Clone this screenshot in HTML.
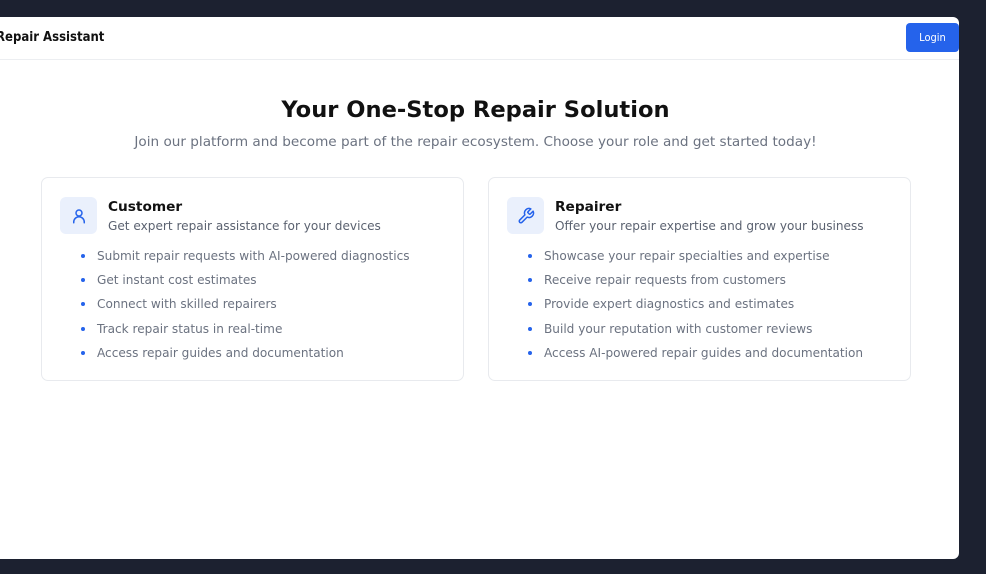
<!DOCTYPE html>
<html><head><style>
*{margin:0;padding:0;box-sizing:border-box}
body{width:986px;height:574px;background:#1c2130;font-family:"DejaVu Sans","Liberation Sans",sans-serif;position:relative;overflow:hidden}
.panel{position:absolute;left:0;top:17px;width:959px;height:542px;background:#fff;border-radius:0 6px 6px 0}
.hdr{height:43px;border-bottom:1px solid #eceef1;position:relative}
.brand{position:absolute;left:-4px;top:13px;font-size:13px;font-weight:bold;color:#111;font-family:"DejaVu Sans Condensed","DejaVu Sans",sans-serif}
.login{position:absolute;left:906px;top:6px;width:53px;height:29px;background:#2563eb;color:#fff;border-radius:4px;font-size:11px;text-align:center;line-height:29px;font-family:"DejaVu Sans Condensed","DejaVu Sans",sans-serif}
h1{position:absolute;top:80px;left:0;width:951px;text-align:center;font-size:22.6px;color:#111;font-weight:bold}
.sub{position:absolute;top:117px;left:0;width:951px;text-align:center;font-size:13.6px;color:#6b7280}
.card{position:absolute;top:160px;width:423px;height:204px;border:1px solid #e8eaee;border-radius:7px}
.ic{position:absolute;left:18px;top:19px;width:37px;height:37px;background:#eaf0fc;border-radius:6px;display:flex;align-items:center;justify-content:center}
.ct{position:absolute;left:66px;top:21px;font-size:13.7px;font-weight:bold;color:#111}
.cs{position:absolute;left:66px;top:41px;font-size:12.1px;color:#5b6270}
ul{position:absolute;left:37px;top:70px;list-style:none}
li{font-size:12.1px;color:#6b7280;height:24.2px;line-height:16px;position:relative;padding-left:18px}
li:before{content:"";position:absolute;left:2px;top:6px;width:4px;height:4px;border-radius:50%;background:#2563eb}
</style></head><body>
<div class="panel">
<div class="hdr"><div class="brand">Repair Assistant</div><div class="login">Login</div></div>
<h1>Your One-Stop Repair Solution</h1>
<div class="sub">Join our platform and become part of the repair ecosystem. Choose your role and get started today!</div>
<div class="card" style="left:41px">
<div class="ic"><svg width="18" height="18" viewBox="0 0 24 24" fill="none" stroke="#2563eb" stroke-width="2" stroke-linecap="round"><circle cx="12" cy="8" r="4"/><path d="M5 21v-1a7 7 0 0 1 14 0v1"/></svg></div>
<div class="ct">Customer</div><div class="cs">Get expert repair assistance for your devices</div>
<ul><li>Submit repair requests with AI-powered diagnostics</li><li>Get instant cost estimates</li><li>Connect with skilled repairers</li><li>Track repair status in real-time</li><li>Access repair guides and documentation</li></ul>
</div>
<div class="card" style="left:488px">
<div class="ic"><svg width="18" height="18" viewBox="0 0 24 24" fill="none" stroke="#2563eb" stroke-width="2" stroke-linecap="round" stroke-linejoin="round"><path d="M14.7 6.3a1 1 0 0 0 0 1.4l1.6 1.6a1 1 0 0 0 1.4 0l3.77-3.77a6 6 0 0 1-7.94 7.94l-6.91 6.91a2.12 2.12 0 0 1-3-3l6.91-6.91a6 6 0 0 1 7.94-7.94l-3.760 3.76z"/></svg></div>
<div class="ct">Repairer</div><div class="cs">Offer your repair expertise and grow your business</div>
<ul><li>Showcase your repair specialties and expertise</li><li>Receive repair requests from customers</li><li>Provide expert diagnostics and estimates</li><li>Build your reputation with customer reviews</li><li>Access AI-powered repair guides and documentation</li></ul>
</div>
</div>
</body></html>
